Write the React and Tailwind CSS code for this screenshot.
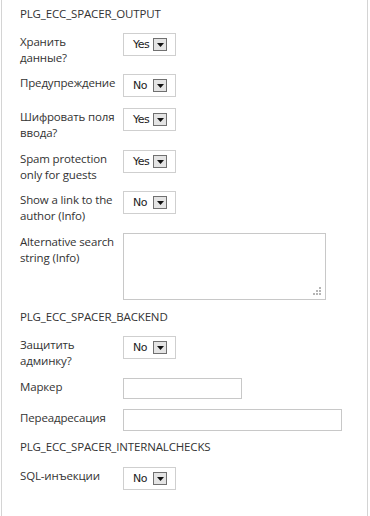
import React from "react";

const font = { fontFamily: '"Open Sans", "DejaVu Sans", sans-serif' };

const Select = ({ value }) => (
  <div className="flex h-[23px] w-[53px] shrink-0 items-center border border-[#cfcfcf] bg-white pl-[9px] pr-[8px]">
    <span className="flex-1 text-[11px] leading-none text-[#222]" style={{ fontFamily: '"DejaVu Sans", sans-serif', letterSpacing: "-0.5px" }}>
      {value}
    </span>
    <span className="flex h-[13px] w-[14px] items-center justify-center border border-[#707070] bg-[#e4e4e4]">
      <svg width="7" height="4" viewBox="0 0 7 4">
        <path d="M0 0h7L3.5 4z" fill="#111" />
      </svg>
    </span>
  </div>
);

const Row = ({ label, children, className = "" }) => (
  <div className={`flex items-start ${className}`}>
    <div className="w-[103px] shrink-0 pt-[1px] pr-[2px] text-[11.5px] leading-[16px] tracking-[-0.15px] text-[#333]">{label}</div>
    {children}
  </div>
);

const Heading = ({ children, className = "" }) => (
  <div className={`text-[11.5px] leading-[16px] tracking-[-0.15px] text-[#333] ${className}`}>{children}</div>
);

export default function App() {
  return (
    <div className="min-h-[516px] w-[370px] bg-white" style={font}>
      <div className="ml-[1px] min-h-[516px] w-[367px] border-x border-[#d4d4d4] pl-[18px] pt-[6px]">
        <Heading className="mb-[11px]">PLG_ECC_SPACER_OUTPUT</Heading>

        <Row
          label={
            <>
              Хранить
              <br />
              данные?
            </>
          }
          className="mb-[8px]"
        >
          <Select value="Yes" />
        </Row>
        <Row label="Предупреждение" className="mb-[11px]">
          <Select value="No" />
        </Row>
        <Row label="Шифровать поля ввода?" className="mb-[9px]">
          <Select value="Yes" />
        </Row>
        <Row label="Spam protection only for guests" className="mb-[8px]">
          <Select value="Yes" />
        </Row>
        <Row label="Show a link to the author (Info)" className="mb-[9px]">
          <Select value="No" />
        </Row>
        <Row label="Alternative search string (Info)" className="mb-[9px]">
          <div className="relative h-[67px] w-[203px] border border-[#c8c8c8] bg-white">
            <svg className="absolute bottom-[3px] right-[3px]" width="10" height="10" viewBox="0 0 10 10">
              <g fill="#b5b5b5">
                <rect x="7" y="1" width="2" height="2" />
                <rect x="4" y="4" width="2" height="2" />
                <rect x="7" y="4" width="2" height="2" />
                <rect x="1" y="7" width="2" height="2" />
                <rect x="4" y="7" width="2" height="2" />
                <rect x="7" y="7" width="2" height="2" />
              </g>
            </svg>
          </div>
        </Row>

        <Heading className="mb-[11px]">PLG_ECC_SPACER_BACKEND</Heading>

        <Row label="Защитить админку?" className="mb-[9px]">
          <Select value="No" />
        </Row>
        <Row label="Маркер" className="mb-[10px]">
          <div className="h-[21px] w-[119px] border border-[#c8c8c8] bg-white" />
        </Row>
        <Row label="Переадресация" className="mb-[8px]">
          <div className="h-[22px] w-[219px] border border-[#c8c8c8] bg-white" />
        </Row>

        <Heading className="mb-[12px]">PLG_ECC_SPACER_INTERNALCHECKS</Heading>

        <Row label="SQL-инъекции">
          <Select value="No" />
        </Row>
      </div>
    </div>
  );
}
